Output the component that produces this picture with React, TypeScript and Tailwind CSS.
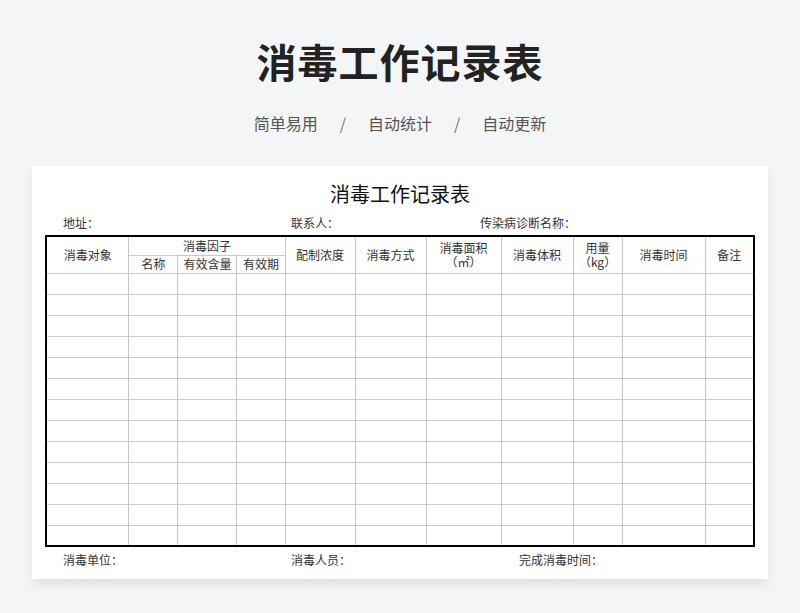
const FONT = { fontFamily: '"Noto Sans CJK SC", "Noto Sans", sans-serif' };

const WIDTHS = [83, 49, 59, 48, 70, 71, 75, 72, 49, 83, 49];
const ROWS = Array.from({ length: 13 });

const th = 'border border-[#c8c8c8] font-normal text-[12px] text-[#333] leading-[14px] p-0';
const td = 'border border-[#c8c8c8] h-[21px] p-0';

export default function App() {
  return (
    <div style={FONT} className="w-[800px] h-[613px] bg-[#f4f5f7] flex flex-col items-center overflow-hidden">
      <h1 className="mt-[34px] text-[40px] leading-[54px] font-bold text-[#222] tracking-[1px]">消毒工作记录表</h1>
      <div className="mt-[23px] flex items-center gap-[22px] text-[16px] text-[#555] leading-[24px]">
        <span>简单易用</span>
        <span className="text-[#777]">/</span>
        <span>自动统计</span>
        <span className="text-[#777]">/</span>
        <span>自动更新</span>
      </div>
      <div className="mt-[31px] w-[736px] h-[413px] bg-white shadow-[0_6px_10px_rgba(0,0,0,0.08)] flex flex-col items-center">
        <div className="mt-[14px] text-[20px] leading-[28px] text-[#111]">消毒工作记录表</div>
        <div className="mt-[7px] w-full flex text-[12px] text-[#333] leading-[16px] pl-[31px]">
          <span className="w-[228px]">地址：</span>
          <span className="w-[189px]">联系人：</span>
          <span>传染病诊断名称：</span>
        </div>
        <table className="mt-[4px] table-fixed border-collapse border-2 border-black w-[708px]">
          <colgroup>
            {WIDTHS.map((w, i) => (
              <col key={i} style={{ width: w }} />
            ))}
          </colgroup>
          <thead>
            <tr className="h-[19px]">
              <th rowSpan={2} className={th}>消毒对象</th>
              <th colSpan={3} className={th}>消毒因子</th>
              <th rowSpan={2} className={th}>配制浓度</th>
              <th rowSpan={2} className={th}>消毒方式</th>
              <th rowSpan={2} className={th}>消毒面积<br />（㎡）</th>
              <th rowSpan={2} className={th}>消毒体积</th>
              <th rowSpan={2} className={th}>用量<br />（kg）</th>
              <th rowSpan={2} className={th}>消毒时间</th>
              <th rowSpan={2} className={th}>备注</th>
            </tr>
            <tr className="h-[18px]">
              <th className={th}>名称</th>
              <th className={th}>有效含量</th>
              <th className={th}>有效期</th>
            </tr>
          </thead>
          <tbody>
            {ROWS.map((_, r) => (
              <tr key={r}>
                {WIDTHS.map((_, c) => (
                  <td key={c} className={td} />
                ))}
              </tr>
            ))}
          </tbody>
        </table>
        <div className="mt-[5px] w-full flex text-[12px] text-[#333] leading-[16px] pl-[31px]">
          <span className="w-[228px]">消毒单位：</span>
          <span className="w-[228px]">消毒人员：</span>
          <span>完成消毒时间：</span>
        </div>
      </div>
    </div>
  );
}
